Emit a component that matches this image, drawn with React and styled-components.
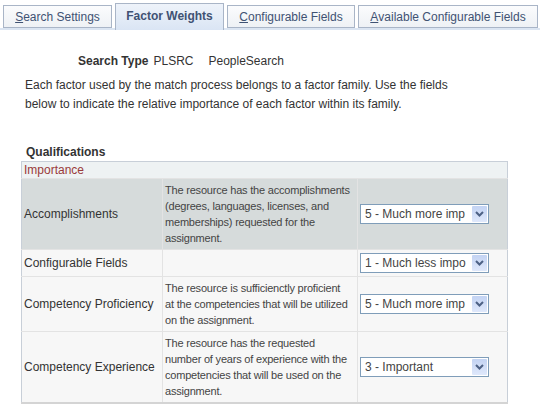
import React from 'react'
import styled, { createGlobalStyle } from 'styled-components'

const GlobalStyle = createGlobalStyle`
  body {
    margin: 0;
    background: #fff;
    font-family: Arial, "Liberation Sans", sans-serif;
  }
`

const Page = styled.div`
  width: 540px;
  height: 406px;
  overflow: hidden;
`

const TabBar = styled.div`
  display: flex;
  align-items: flex-end;
  gap: 3px;
  padding: 3px 0 0 3px;
  height: 25px;
  border-bottom: 2px solid #dbe5f2;
`

const Tab = styled.div`
  box-sizing: border-box;
  width: ${p => p.$width}px;
  height: ${p => (p.$active ? 27 : 23)}px;
  margin-bottom: ${p => (p.$active ? -2 : 0)}px;
  display: flex;
  align-items: center;
  justify-content: center;
  padding-bottom: ${p => (p.$active ? 3 : 0)}px;
  border: 1px solid #a9b5c7;
  border-bottom: ${p => (p.$active ? 'none' : '1px solid #a9b5c7')};
  background: ${p =>
    p.$active
      ? 'linear-gradient(#eef3fa, #dae5f4)'
      : 'linear-gradient(#fbfcfd, #eef1f5)'};
  font-size: 12px;
  font-weight: ${p => (p.$active ? 700 : 400)};
  color: #3f5273;
  white-space: nowrap;

  u {
    text-decoration: underline;
  }
`

const Header = styled.div`
  display: flex;
  align-items: center;
  gap: 5px;
  padding: 23px 0 0 78px;
  font-size: 12px;
  color: #333;
  line-height: 16px;
`

const HeaderLabel = styled.span`
  font-weight: 700;
`

const HeaderValue = styled.span`
  margin-right: ${p => p.$gap || 0}px;
`

const Intro = styled.p`
  margin: 7px 0 0 25px;
  width: 430px;
  font-size: 12px;
  line-height: 19px;
  color: #333;
`

const Section = styled.div`
  margin: 31px 0 0 21px;
  width: 486px;
`

const SectionTitle = styled.div`
  font-size: 12px;
  font-weight: 700;
  color: #333;
  padding: 0 0 2px 5px;
  line-height: 14px;
`

const Grid = styled.table`
  border-collapse: collapse;
  width: 486px;
  table-layout: fixed;
  border: 1px solid #c8cfd8;
  border-bottom: 2px solid #d4d4d4;
`

const GroupRow = styled.tr`
  background: #eef2f3;
`

const GroupCell = styled.td`
  height: 16px;
  padding: 0 0 0 2px;
  font-size: 12px;
  line-height: 16px;
  color: #9a3a3a;
`

const Row = styled.tr`
  background: ${p => (p.$shaded ? '#d6dbdb' : '#f7f7f7')};
`

const Cell = styled.td`
  border-top: 1px solid #e3e3e3;
  border-left: ${p => (p.$first ? 'none' : '1px solid #e3e3e3')};
  padding: 3px 2px;
  vertical-align: middle;
  font-size: 12px;
  line-height: 16px;
  color: #333;
  height: 20px;
  white-space: nowrap;
  overflow: hidden;
`

const DescLine = styled.div`
  font-size: 11px;
  letter-spacing: -0.2px;
  line-height: 16px;
  color: #444;
`

const Select = styled.div`
  box-sizing: border-box;
  width: 129px;
  height: 20px;
  display: flex;
  align-items: center;
  justify-content: space-between;
  border: 1px solid #7f9db9;
  background: #fff;
  padding: 0 1px 0 4px;
  font-size: 12px;
  color: #444;
  white-space: nowrap;
  overflow: hidden;
`

const SelectText = styled.span`
  overflow: hidden;
  flex: 1;
`

const Arrow = styled.span`
  width: 15px;
  height: 16px;
  flex: none;
  display: flex;
  align-items: center;
  justify-content: center;
  background: linear-gradient(#c3d3f3, #dfe8fb);
  border-radius: 1px;
`

const Chevron = () => (
  <svg width="9" height="6" viewBox="0 0 9 6">
    <path d="M1 1 L4.5 4.5 L8 1" fill="none" stroke="#4d6185" strokeWidth="2" />
  </svg>
)

const tabs = [
  { label: 'Search Settings', key: 'S', width: 109 },
  { label: 'Factor Weights', width: 109, active: true },
  { label: 'Configurable Fields', key: 'C', width: 128 },
  { label: 'Available Configurable Fields', key: 'A', width: 180 },
]

const factors = [
  {
    name: 'Accomplishments',
    desc: [
      'The resource has the accomplishments',
      '(degrees, languages, licenses, and',
      'memberships) requested for the',
      'assignment.',
    ],
    value: '5 - Much more imp',
    shaded: true,
  },
  { name: 'Configurable Fields', desc: [], value: '1 - Much less impo' },
  {
    name: 'Competency Proficiency',
    desc: [
      'The resource is sufficienctly proficient',
      'at the competencies that will be utilized',
      'on the assignment.',
    ],
    value: '5 - Much more imp',
  },
  {
    name: 'Competency Experience',
    desc: [
      'The resource has the requested',
      'number of years of experience with the',
      'competencies that will be used on the',
      'assignment.',
    ],
    value: '3 - Important',
  },
]

const TabLabel = ({ label, accessKey }) => {
  if (!accessKey) return label
  return (
    <>
      <u>{label[0]}</u>
      {label.slice(1)}
    </>
  )
}

const App = () => {
  return (
    <Page>
      <GlobalStyle />
      <TabBar>
        {tabs.map(t => (
          <Tab key={t.label} $width={t.width} $active={t.active}>
            <TabLabel label={t.label} accessKey={t.key} />
          </Tab>
        ))}
      </TabBar>
      <Header>
        <HeaderLabel>Search Type</HeaderLabel>
        <HeaderValue $gap={10}>PLSRC</HeaderValue>
        <HeaderValue>PeopleSearch</HeaderValue>
      </Header>
      <Intro>
        Each factor used by the match process belongs to a factor family. Use the fields
        below to indicate the relative importance of each factor within its family.
      </Intro>
      <Section>
        <SectionTitle>Qualifications</SectionTitle>
        <Grid>
          <colgroup>
            <col style={{ width: 141 }} />
            <col style={{ width: 195 }} />
            <col style={{ width: 150 }} />
          </colgroup>
          <tbody>
            <GroupRow>
              <GroupCell colSpan={3}>Importance</GroupCell>
            </GroupRow>
            {factors.map(f => (
              <Row key={f.name} $shaded={f.shaded}>
                <Cell $first>{f.name}</Cell>
                <Cell>
                  {f.desc.map(line => (
                    <DescLine key={line}>{line}</DescLine>
                  ))}
                </Cell>
                <Cell>
                  <Select>
                    <SelectText>{f.value}</SelectText>
                    <Arrow>
                      <Chevron />
                    </Arrow>
                  </Select>
                </Cell>
              </Row>
            ))}
          </tbody>
        </Grid>
      </Section>
    </Page>
  )
}

export default App
